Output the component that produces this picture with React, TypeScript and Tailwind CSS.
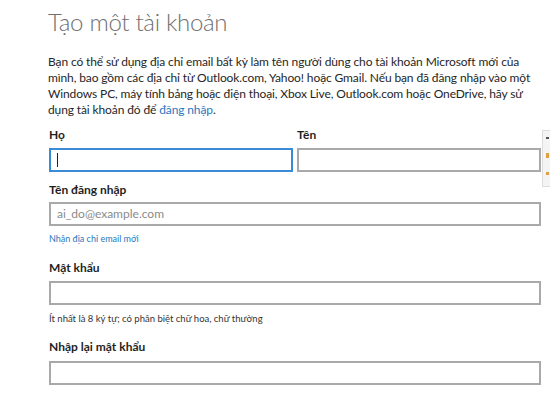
const font = { fontFamily: 'Lato, "Open Sans", sans-serif' };

function Label({ children }: { children: React.ReactNode }) {
  return <div className="text-[12px] leading-4 font-bold text-[#1f1f1f]">{children}</div>;
}

function Field({ focused, placeholder }: { focused?: boolean; placeholder?: string }) {
  return (
    <div
      className={
        "h-[24px] border-2 bg-white flex items-center px-[6px] " +
        (focused ? "border-[#3a8ad6]" : "border-[#a9a9a9]")
      }
    >
      {focused && <span className="w-px h-[14px] bg-[#222]" />}
      {placeholder && <span className="text-[12px] text-[#8a8a8a]">{placeholder}</span>}
    </div>
  );
}

export default function App() {
  return (
    <div className="relative w-[550px] h-[395px] overflow-hidden bg-white" style={font}>
      <div className="pl-[48px] pt-[4px] w-[541px]">
        <h1 className="text-[24px] leading-[36px] font-light tracking-[-0.3px] text-[#6f6f6f]">Tạo một tài khoản</h1>

        <p className="mt-[14px] text-[12px] leading-4 tracking-[-0.12px] text-[#262626] whitespace-nowrap">
          Bạn có thể sử dụng địa chỉ email bất kỳ làm tên người dùng cho tài khoản Microsoft mới của
          <br />
          mình, bao gồm các địa chỉ từ Outlook.com, Yahoo! hoặc Gmail. Nếu bạn đã đăng nhập vào một
          <br />
          Windows PC, máy tính bảng hoặc điện thoại, Xbox Live, Outlook.com hoặc OneDrive, hãy sử
          <br />
          dụng tài khoản đó để <a className="text-[#2a77bd]">đăng nhập</a>.
        </p>

        <div className="mt-[9px] pl-px grid grid-cols-2 gap-x-[4px]">
          <div>
            <Label>Họ</Label>
            <div className="mt-[5px]">
              <Field focused />
            </div>
          </div>
          <div>
            <Label>Tên</Label>
            <div className="mt-[5px]">
              <Field />
            </div>
          </div>
        </div>

        <div className="pl-px">
          <div className="mt-[10px]">
            <Label>Tên đăng nhập</Label>
          </div>
          <div className="mt-[4px]">
            <Field placeholder="ai_do@example.com" />
          </div>
          <div className="mt-[6px] text-[9px] leading-[14px] text-[#2a77bd]">Nhận địa chỉ email mới</div>

          <div className="mt-[14px]">
            <Label>Mật khẩu</Label>
          </div>
          <div className="mt-[5px]">
            <Field />
          </div>
          <div className="mt-[7px] text-[9.5px] leading-[14px] text-[#333]">
            Ít nhất là 8 ký tự; có phân biệt chữ hoa, chữ thường
          </div>

          <div className="mt-[13px]">
            <Label>Nhập lại mật khẩu</Label>
          </div>
          <div className="mt-[6px]">
            <Field />
          </div>
        </div>
      </div>

      <div className="absolute left-[542px] top-[130px] w-[10px] h-[57px] bg-[#f4f4f4] border border-[#dcdcdc] flex flex-col items-center pt-[6px] gap-[14px]">
        <span className="w-[3px] h-[2px] bg-[#555]" />
        <span className="w-[3px] h-[5px] bg-[#e0a040]" />
        <span className="w-[3px] h-[3px] bg-[#e0a040]" />
      </div>
    </div>
  );
}
